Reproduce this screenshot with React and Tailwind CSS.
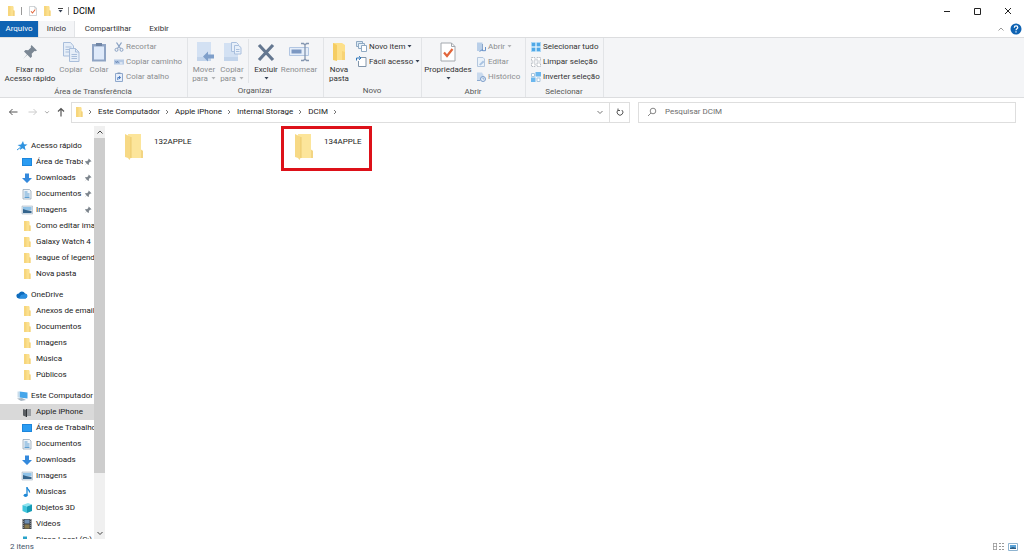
import React, { useState } from 'react';

/* ---------- Icons ---------- */

const FolderIcon = ({ className = 'w-3 h-3' }) => (
  <svg viewBox="0 0 12 12" className={className}>
    <path d="M3 1h5l.6 1v3l.9.5V11H3z" fill="#fbe08f" />
    <path d="M3 1h2.500v10H3z" fill="#f7d67c" />
    <path d="M8 5.400l1.500.4V11H8z" fill="#f3d27c" />
  </svg>
);

const BigFolderIcon = () => (
  <svg viewBox="0 0 22 28" className="w-[22px] h-7">
    <path d="M5 1h13v16l2 1v7H7z" fill="#fce59b" />
    <path d="M18 16.500l2 1.500v7h-2z" fill="#f3d583" />
    <path d="M2 1l6 3v20l-1.500 3-1.500-2-3-1z" fill="#f7d985" />
    <path d="M8 4v21" stroke="#e8c566" strokeWidth=".8" />
  </svg>
);

const RibbonFolderIcon = () => (
  <svg viewBox="0 0 20 20" className="w-5 h-5">
    <path d="M4 1h9l3 2v15H4z" fill="#fde08a" />
    <path d="M4 1l4 2v16l-4-1z" fill="#f5cd63" />
    <path d="M13 9l3 1v8h-3z" fill="#f7d375" />
  </svg>
);

const PinIcon = ({ className, color = '#7b8794' }) => (
  <svg viewBox="0 0 16 16" className={className}>
    <path d="M9.500 1L15 6.500l-1.500.8-1-.3-2.800 2.800.3 2.700-1.500 1.500-3.200-3.200L1 15l4-4.500L2 7.500 3.500 6l2.700.3L9 3.500l-.3-1z" fill={color} />
  </svg>
);

const CheckDocIcon = ({ className }) => (
  <svg viewBox="0 0 16 20" className={className}>
    <path d="M1 1h10.500L15 4.500V19H1z" fill="#fff" stroke="#a3a8ae" />
    <path d="M11.500 1v3.500H15" fill="none" stroke="#a3a8ae" />
    <path d="M4 10.500l3 3.500 5.500-7" fill="none" stroke="#e2653a" strokeWidth="2.200" />
  </svg>
);

const CopyIcon = () => (
  <svg viewBox="0 0 20 20" className="w-5 h-5" fill="#e6eef8" stroke="#a9bedb">
    <path d="M2.500.5h7L12.500 4v10h-10z" />
    <path d="M4.500 5h6M4.500 7.500h6M4.500 10h6" />
    <path d="M8.500 6.500h6l3.500 3.500v9.500H8.500z" />
    <path d="M14.500 6.500V10H18M10.500 12.500h5.500M10.500 14.500h5.500M10.500 16.500h5.500" fill="none" />
  </svg>
);

const PasteIcon = () => (
  <svg viewBox="0 0 20 20" className="w-5 h-5">
    <path d="M3 2h14v17.500H3z" fill="#8fa4c4" />
    <path d="M5 4.500h10v13H5z" fill="#dfeafa" />
    <path d="M7 1h6v3H7z" fill="#7186a5" />
  </svg>
);

const ScissorsIcon = () => (
  <svg viewBox="0 0 10 10" className="w-[10px] h-[10px]" fill="none" stroke="#8aa2c4">
    <path d="M2.500.5l4 6M7.500.5l-4 6" strokeWidth="1.300" />
    <circle cx="2.500" cy="7.800" r="1.500" />
    <circle cx="7.500" cy="7.800" r="1.500" />
  </svg>
);

const PathIcon = () => (
  <svg viewBox="0 0 10 10" className="w-[10px] h-[10px]">
    <path d="M0 2.500h10v5H0z" fill="#b5c9e4" />
    <path d="M1.500 4l1 2 1-2 1 2" fill="none" stroke="#6484b3" strokeWidth=".8" />
    <path d="M6 6h2.500" stroke="#fff" />
  </svg>
);

const ShortcutPasteIcon = () => (
  <svg viewBox="0 0 10 10" className="w-[10px] h-[10px]">
    <path d="M1.500 1.500h7v8h-7z" fill="#e6eefa" stroke="#8fa8cc" />
    <path d="M3.500.5h3v1.500h-3z" fill="#8198ba" />
    <path d="M3.800 8V5.500h2.500M5 4l1.700 1.500L5 7" fill="none" stroke="#4c7cc0" />
  </svg>
);

const MoveIcon = () => (
  <svg viewBox="0 0 20 20" className="w-5 h-5">
    <path d="M3 0h14v19H3z" fill="#d3e1f3" />
    <path d="M3 15h14v4H3z" fill="#c2d4eb" />
    <path d="M9 14.500l5-5v3h6v4h-6v3z" fill="#7f9fca" />
  </svg>
);

const CopyToIcon = () => (
  <svg viewBox="0 0 20 20" className="w-5 h-5">
    <path d="M2 1h14v18H2z" fill="#d3e1f3" />
    <path d="M2 15h14v4H2z" fill="#c2d4eb" />
    <path d="M9.500.5h5l2 2v7h-7z" fill="#e8f0fa" stroke="#aac0de" />
    <path d="M12.500 3.500h4l2.500 2v6.500h-6.500z" fill="#e8f0fa" stroke="#aac0de" />
    <path d="M14 7.500h3.500M14 9.500h3.500" stroke="#aac0de" />
  </svg>
);

const DeleteIcon = () => (
  <svg viewBox="0 0 20 20" className="w-5 h-5">
    <path d="M3 3l14 15M17 3L3 18" stroke="#647790" strokeWidth="3.200" />
  </svg>
);

const RenameIcon = () => (
  <svg viewBox="0 0 22 20" className="w-[22px] h-5">
    <path d="M1.500 5.500h19v8h-19z" fill="#e5eefa" stroke="#b2c6e2" />
    <path d="M3.500 7.500h10v4h-10z" fill="#7c98c2" />
    <path d="M13 1.500h2.500l1.500 1.500 1.500-1.500H21M17 3v14M13 18.500h2.500L17 17l1.500 1.500H21" fill="none" stroke="#8496b0" strokeWidth="1.300" />
  </svg>
);

const NewItemIcon = () => (
  <svg viewBox="0 0 11 11" className="w-[11px] h-[11px]">
    <path d="M.5.500h6v5h-6z" fill="#dbe9f5" stroke="#8fa9c2" />
    <path d="M2.500 2.500h6v5h-6z" fill="#eaf3fa" stroke="#8fa9c2" />
    <path d="M5.500 4.500h5v6h-5z" fill="#fff" stroke="#8fa9c2" />
  </svg>
);

const EasyAccessIcon = () => (
  <svg viewBox="0 0 11 11" className="w-[11px] h-[11px]">
    <path d="M5 1.500h5v9H2.500V5" fill="#fff" stroke="#8195aa" />
    <path d="M.5 4.500V2h3.500M3 .2L5 2 3 3.800" fill="none" stroke="#2c74b8" />
  </svg>
);

const OpenIcon = () => (
  <svg viewBox="0 0 10 10" className="w-[10px] h-[10px]">
    <path d="M1 .5h5.500V9H1z" fill="#b9cfe9" />
    <path d="M6.500 2v7" stroke="#8ba7cb" />
    <path d="M3.500 9.500l3-2v1.200H9.500V5" fill="none" stroke="#6a93c9" />
  </svg>
);

const EditIcon = () => (
  <svg viewBox="0 0 10 10" className="w-[10px] h-[10px]">
    <path d="M1.500.5H7l1.500 1.500v7.500h-7z" fill="#eaf2fa" stroke="#b4c7de" />
    <path d="M3 7.500l4-4 1.500 1.500-4 3.500z" fill="#a9c3e2" />
  </svg>
);

const HistoryIcon = () => (
  <svg viewBox="0 0 10 10" className="w-[10px] h-[10px]">
    <path d="M1 .5h5L7.500 3v6H1z" fill="#c9daee" />
    <circle cx="7" cy="7" r="2.500" fill="#e6eff9" stroke="#7b9cc8" />
    <path d="M7 5.500V7h1.300M1 8.500h3" fill="none" stroke="#7b9cc8" strokeWidth=".8" />
  </svg>
);

const SelectAllIcon = () => (
  <svg viewBox="0 0 10 10" className="w-[10px] h-[10px]">
    <path d="M0 0h10v10H0z" fill="#a9d6f5" />
    <path d="M1 1h3.500v3.500H1zM5.500 1H9v3.500H5.500zM1 5.500h3.500V9H1zM5.500 5.500H9V9H5.500z" fill="#4fa8e6" />
    <path d="M5 0v10M0 5h10" stroke="#e8f4fc" />
  </svg>
);

const SelectNoneIcon = () => (
  <svg viewBox="0 0 10 10" className="w-[10px] h-[10px]" fill="#fff" stroke="#b9bec4" strokeDasharray="1.500 .7">
    <path d="M.5.500h3.500V4H.5zM6 .5h3.500V4H6zM.5 6h3.500v3.500H.5zM6 6h3.500v3.500H6z" />
  </svg>
);

const InvertIcon = () => (
  <svg viewBox="0 0 10 10" className="w-[10px] h-[10px]">
    <path d="M.5 1.500h3V4.500h-3zM6 6h3v3.500H6z" fill="#fff" stroke="#a9c6de" />
    <path d="M4.500 0H10v4.500H4.500zM0 5.500h4.500V10H0z" fill="#6bb7ee" />
  </svg>
);

const StarIcon = () => (
  <svg viewBox="0 0 12 12" className="w-3 h-3">
    <path d="M7 1l1 3.300 3.500.3-2.800 2 .9 3.600-3-2-2.800 1.800.7-3.200L1.500 5l3.600-.4z" fill="#2e93e0" />
    <path d="M1 10l3-2.300" stroke="#2e93e0" />
  </svg>
);

const DesktopIcon = () => (
  <svg viewBox="0 0 12 12" className="w-3 h-3">
    <path d="M1 2h10v8H1z" fill="#1c86dc" />
    <path d="M2 3h8v6H2z" fill="#2b9cf2" />
  </svg>
);

const DownloadIcon = () => (
  <svg viewBox="0 0 12 12" className="w-3 h-3">
    <path d="M4 1.500h4V6h3l-5 5-5-5h3z" fill="#3489dc" />
  </svg>
);

const DocumentIcon = () => (
  <svg viewBox="0 0 12 12" className="w-3 h-3">
    <path d="M2 1.500h6.500L10 3v8H2z" fill="#eef4f9" stroke="#98a8b7" strokeWidth=".8" />
    <path d="M3.500 4h3M3.500 6h5M3.500 8h5M3.500 9.500h5" stroke="#4d94cc" strokeWidth=".9" />
  </svg>
);

const PictureIcon = () => (
  <svg viewBox="0 0 12 12" className="w-3 h-3">
    <path d="M1 2h10.500v8H1z" fill="#dce7f0" stroke="#a9b7c3" strokeWidth=".6" />
    <path d="M2 3h8.500v3H2z" fill="#8fc2e8" />
    <path d="M2 5l3 1 5.500 1v2H2z" fill="#34648c" />
  </svg>
);

const CloudIcon = () => (
  <svg viewBox="0 0 12 12" className="w-3 h-3">
    <path d="M3 9.500a2.500 2.500 0 0 1-.2-5A3.500 3.500 0 0 1 9 4.500a2.600 2.600 0 0 1 .5 5z" fill="#0f6cbd" />
    <path d="M5 6l5-1.200a2.500 2.500 0 0 1-.5 4.700H3z" fill="#2b8fe0" />
  </svg>
);

const ComputerIcon = () => (
  <svg viewBox="0 0 12 12" className="w-3 h-3">
    <path d="M3.500 1.500l8 1v6l-8-1z" fill="#46a6ea" />
    <path d="M1 8.500l5-.5 4 2-5 1z" fill="#a7b6c3" />
    <path d="M1.500 1.500h2v6h-2z" fill="#c9dceb" />
  </svg>
);

const PhoneIcon = () => (
  <svg viewBox="0 0 12 12" className="w-3 h-3">
    <path d="M2 3l3.500 1v7L2 9.500z" fill="#5b5f63" />
    <path d="M5.500 3H10v7H5.500z" fill="#9a9ea2" />
    <path d="M5.500 3v8" stroke="#2f3235" />
  </svg>
);

const MusicIcon = () => (
  <svg viewBox="0 0 12 12" className="w-3 h-3">
    <path d="M6 1.500c.3 2 3 2.500 2.500 5" fill="none" stroke="#1d87d6" strokeWidth="1.300" />
    <path d="M6 1v8" stroke="#1d87d6" strokeWidth="1.300" />
    <ellipse cx="4.600" cy="9.300" rx="2" ry="1.600" fill="#1d87d6" />
  </svg>
);

const CubeIcon = () => (
  <svg viewBox="0 0 12 12" className="w-3 h-3">
    <path d="M1.500 3L7 1l4 1.500-5 2z" fill="#8ee3ef" />
    <path d="M1.500 3L6 4.500V11l-4.500-2z" fill="#3fc5dc" />
    <path d="M6 4.500l5-2V9l-5 2z" fill="#159bb5" />
  </svg>
);

const VideoIcon = () => (
  <svg viewBox="0 0 12 12" className="w-3 h-3">
    <path d="M1.500 1h9v10h-9z" fill="#3c424a" />
    <path d="M3.500 1.500h5v4h-5z" fill="#6f8fb3" />
    <path d="M3.500 6.500h5v4h-5z" fill="#8a7b4e" />
    <path d="M2.400 1v10M9.600 1v10" stroke="#c4c8cc" strokeWidth=".6" strokeDasharray="1 1" />
  </svg>
);

const DriveIcon = () => (
  <svg viewBox="0 0 12 12" className="w-3 h-3">
    <path d="M2 2.500h4V6H2z" fill="#29a3c9" />
    <path d="M1 7h10v3H1z" fill="#a5adb5" />
  </svg>
);

const Chevron = ({ d, className = 'w-2 h-2', color = '#777' }) => (
  <svg viewBox="0 0 8 8" className={className}>
    <path d={d} fill="none" stroke={color} />
  </svg>
);

const UP = 'M1.500 5.500L4 3l2.500 2.500';
const DOWN = 'M1.500 3L4 5.500 6.500 3';
const RIGHT = 'M3 2l2 2-2 2';

const Caret = ({ className = 'text-gray-700' }) => (
  <svg viewBox="0 0 5 3" className={`w-[5px] h-[3px] inline-block shrink-0 ${className}`}>
    <path d="M.5 0h4L2.500 2.500z" fill="currentColor" />
  </svg>
);

/* ---------- Data ---------- */

const tree = [
  {
    label: 'Acesso rápido',
    icon: StarIcon,
    items: [
      { label: 'Área de Trabalho', icon: DesktopIcon, pinned: true },
      { label: 'Downloads', icon: DownloadIcon, pinned: true },
      { label: 'Documentos', icon: DocumentIcon, pinned: true },
      { label: 'Imagens', icon: PictureIcon, pinned: true },
      { label: 'Como editar imagens', icon: FolderIcon },
      { label: 'Galaxy Watch 4', icon: FolderIcon },
      { label: 'league of legends', icon: FolderIcon },
      { label: 'Nova pasta', icon: FolderIcon },
    ],
  },
  {
    label: 'OneDrive',
    icon: CloudIcon,
    items: [
      { label: 'Anexos de email', icon: FolderIcon },
      { label: 'Documentos', icon: FolderIcon },
      { label: 'Imagens', icon: FolderIcon },
      { label: 'Música', icon: FolderIcon },
      { label: 'Públicos', icon: FolderIcon },
    ],
  },
  {
    label: 'Este Computador',
    icon: ComputerIcon,
    items: [
      { label: 'Apple iPhone', icon: PhoneIcon, selected: true },
      { label: 'Área de Trabalho', icon: DesktopIcon },
      { label: 'Documentos', icon: DocumentIcon },
      { label: 'Downloads', icon: DownloadIcon },
      { label: 'Imagens', icon: PictureIcon },
      { label: 'Músicas', icon: MusicIcon },
      { label: 'Objetos 3D', icon: CubeIcon },
      { label: 'Vídeos', icon: VideoIcon },
      { label: 'Disco Local (C:)', icon: DriveIcon },
    ],
  },
];

const crumbs = ['Este Computador', 'Apple iPhone', 'Internal Storage', 'DCIM'];

/* ---------- Ribbon ---------- */

const Group = ({ label, className, children }) => (
  <div className={`flex flex-col shrink-0 border-r border-[#e2e4e7] pt-px ${className}`}>
    <div className="flex h-[45px]">{children}</div>
    <div className="leading-[16px] -ml-px text-center text-[#555]">{label}</div>
  </div>
);

const BigButton = ({ icon, lines, caret, disabled, className }) => (
  <button
    type="button"
    disabled={disabled}
    className={`flex flex-col items-center shrink-0 pt-[3px] leading-[9px] ${disabled ? 'text-[#8b8d90]' : 'text-[#333]'} ${className}`}
  >
    <span className="h-[23px] flex items-start justify-center">{icon}</span>
    {lines.map((line, i) => (
      <span key={line} className="whitespace-nowrap flex items-center gap-[3px]">
        {line}
        {caret === 'inline' && i === lines.length - 1 && <Caret className="text-[#b0b2b5]" />}
      </span>
    ))}
    {caret === 'below' && <span className="h-[9px] flex items-center"><Caret /></span>}
  </button>
);

const SmallButton = ({ icon, label, caret, disabled }) => (
  <button
    type="button"
    disabled={disabled}
    className={`flex items-center gap-[2px] h-[15px] whitespace-nowrap ${disabled ? 'text-[#8b8d90]' : 'text-[#333]'}`}
  >
    {icon}
    <span>{label}</span>
    {caret && <Caret className={disabled ? 'text-[#b0b2b5]' : 'text-gray-700'} />}
  </button>
);

const Ribbon = () => (
  <div className="flex shrink-0 h-[61px] bg-[#f4f5f7] border-y border-[#dcdddf] overflow-hidden">
    <Group label="Área de Transferência" className="w-[188px]">
      <BigButton className="w-[58px] ml-px" icon={<PinIcon className="w-4 h-4 mt-[2px]" />} lines={['Fixar no', 'Acesso rápido']} />
      <BigButton className="w-6 mr-[2px]" icon={<CopyIcon />} lines={['Copiar']} disabled />
      <BigButton className="w-7" icon={<PasteIcon />} lines={['Colar']} disabled />
      <div className="ml-px">
        <SmallButton icon={<ScissorsIcon />} label="Recortar" disabled />
        <SmallButton icon={<PathIcon />} label="Copiar caminho" disabled />
        <SmallButton icon={<ShortcutPasteIcon />} label="Colar atalho" disabled />
      </div>
    </Group>
    <Group label="Organizar" className="w-[136px]">
      <BigButton className="w-8" icon={<MoveIcon />} lines={['Mover', 'para']} caret="inline" disabled />
      <BigButton className="w-6" icon={<CopyToIcon />} lines={['Copiar', 'para']} caret="inline" disabled />
      <div className="w-px mx-1 bg-[#e2e4e7]" />
      <BigButton className="w-[26px]" icon={<DeleteIcon />} lines={['Excluir']} caret="below" />
      <BigButton className="w-10" icon={<RenameIcon />} lines={['Renomear']} disabled />
    </Group>
    <Group label="Novo" className="w-[98px]">
      <BigButton className="w-[30px]" icon={<RibbonFolderIcon />} lines={['Nova', 'pasta']} />
      <div className="ml-[2px]">
        <SmallButton icon={<NewItemIcon />} label="Novo item" caret />
        <SmallButton icon={<EasyAccessIcon />} label="Fácil acesso" caret />
      </div>
    </Group>
    <Group label="Abrir" className="w-[104px]">
      <BigButton className="w-[52px] mr-[2px]" icon={<CheckDocIcon className="w-4 h-5" />} lines={['Propriedades']} caret="below" />
      <div>
        <SmallButton icon={<OpenIcon />} label="Abrir" caret disabled />
        <SmallButton icon={<EditIcon />} label="Editar" disabled />
        <SmallButton icon={<HistoryIcon />} label="Histórico" disabled />
      </div>
    </Group>
    <Group label="Selecionar" className="w-[78px]">
      <div className="ml-[5px]">
        <SmallButton icon={<SelectAllIcon />} label="Selecionar tudo" />
        <SmallButton icon={<SelectNoneIcon />} label="Limpar seleção" />
        <SmallButton icon={<InvertIcon />} label="Inverter seleção" />
      </div>
    </Group>
  </div>
);

/* ---------- Window parts ---------- */

const TitleBar = () => (
  <header className="flex shrink-0 items-center h-[21px] pl-1">
    <FolderIcon className="w-[14px] h-3" />
    <span className="w-px h-2 ml-[3px] bg-[#999]" />
    <CheckDocIcon className="w-2 h-[10px] ml-[7px]" />
    <FolderIcon className="w-[14px] h-3 ml-[3px]" />
    <button type="button" aria-label="Personalizar" className="ml-1 flex flex-col items-center gap-[1px]">
      <span className="w-[5px] h-px bg-[#444]" />
      <Caret />
    </button>
    <span className="w-px h-2 ml-[5px] mr-1 bg-[#999]" />
    <h1 className="text-[9px] text-black">DCIM</h1>
    <div className="ml-auto flex items-center h-full">
      <button type="button" aria-label="Minimizar" className="w-[30px] flex justify-center">
        <svg viewBox="0 0 8 8" className="w-2 h-2"><path d="M1 4.500h6" stroke="#222" /></svg>
      </button>
      <button type="button" aria-label="Maximizar" className="w-[30px] flex justify-center">
        <svg viewBox="0 0 8 8" className="w-2 h-2"><path d="M1.500 1.500h6v6h-6z" fill="none" stroke="#222" /></svg>
      </button>
      <button type="button" aria-label="Fechar" className="w-8 flex justify-center">
        <svg viewBox="0 0 8 8" className="w-2 h-2"><path d="M1 1l6 6M7 1L1 7" stroke="#222" /></svg>
      </button>
    </div>
  </header>
);

const Tabs = () => (
  <div className="flex shrink-0 items-stretch h-4 text-[#333]">
    <button type="button" className="w-[38px] bg-[#0f63b3] text-white">Arquivo</button>
    <button type="button" className="w-[37px] bg-[#f4f5f7] border-x border-[#e2e4e7]">Início</button>
    <button type="button" className="w-[66px]">Compartilhar</button>
    <button type="button" className="w-9">Exibir</button>
    <div className="ml-auto flex items-center gap-[5px] pr-[2px]">
      <button type="button" aria-label="Minimizar a faixa de opções"><Chevron d={UP} color="#999" /></button>
      <button type="button" aria-label="Ajuda">
        <svg viewBox="0 0 12 12" className="w-3 h-3">
          <circle cx="6" cy="6" r="5.500" fill="#0f63b3" />
          <path d="M4.300 4.700c0-2.400 3.500-2.200 3.500-.2C7.800 5.800 6 5.700 6 7.200M6 8.300v1.200" fill="none" stroke="#fff" strokeWidth="1.200" />
        </svg>
      </button>
    </div>
  </div>
);

const AddressBar = () => {
  const [query, setQuery] = useState('');

  return (
    <div className="flex shrink-0 items-center h-7 px-2">
      <div className="flex items-center w-[63px] gap-[6px]">
        <button type="button" aria-label="Voltar">
          <svg viewBox="0 0 10 10" className="w-[10px] h-[10px]" fill="none" stroke="#555"><path d="M9.500 5H1.500M4.500 2l-3 3 3 3" /></svg>
        </button>
        <button type="button" aria-label="Avançar" disabled className="ml-1">
          <svg viewBox="0 0 10 10" className="w-[10px] h-[10px]" fill="none" stroke="#ccc"><path d="M.5 5h8M5.500 2l3 3-3 3" /></svg>
        </button>
        <button type="button" aria-label="Locais recentes"><Chevron d={DOWN} color="#888" className="w-[6px] h-[6px]" /></button>
        <button type="button" aria-label="Acima">
          <svg viewBox="0 0 10 10" className="w-[10px] h-[10px]" fill="none" stroke="#555" strokeWidth="1.200"><path d="M5 9.500v-8M2 4.500l3-3 3 3" /></svg>
        </button>
      </div>

      {/* Breadcrumb */}
      <nav className="flex flex-1 items-center h-[21px] border border-[#dedede] text-[#222]">
        <FolderIcon className="w-[14px] h-3" />
        <Chevron d={RIGHT} />
        {crumbs.map((crumb) => (
          <React.Fragment key={crumb}>
            <a href="#" className="ml-1 mr-[3px] whitespace-nowrap">{crumb}</a>
            <Chevron d={RIGHT} />
          </React.Fragment>
        ))}
        <button type="button" aria-label="Locais anteriores" className="ml-auto mr-[5px]"><Chevron d={DOWN} /></button>
        <button type="button" aria-label="Atualizar" className="w-5 h-full border-l border-[#dedede] flex items-center justify-center">
          <svg viewBox="0 0 8 8" className="w-2 h-2" fill="none" stroke="#555">
            <path d="M2.200 2A2.900 2.900 0 1 0 5.800 2M2 .5v2h2" />
          </svg>
        </button>
      </nav>

      {/* Search */}
      <label className="flex items-center w-[37.5%] h-[21px] ml-2 pl-2 gap-2 border border-[#dedede]">
        <svg viewBox="0 0 10 10" className="w-[10px] h-[10px]" fill="none" stroke="#888">
          <circle cx="6" cy="4" r="2.800" />
          <path d="M4 6L1 9" />
        </svg>
        <input
          type="text"
          aria-label="Pesquisar DCIM"
          placeholder="Pesquisar DCIM"
          value={query}
          onChange={(e) => setQuery(e.target.value)}
          className="flex-1 min-w-0 outline-none placeholder:text-[#6d6d6d]"
        />
      </label>
    </div>
  );
};

const TreeRow = ({ item, nested }) => {
  const Icon = item.icon;
  return (
    <a
      href="#"
      className={`flex items-center h-4 gap-[3px] whitespace-nowrap overflow-hidden ${nested ? 'pl-[21px]' : 'pl-4'} ${item.selected ? 'bg-[#d9d9d9]' : ''}`}
    >
      <span className="shrink-0"><Icon /></span>
      <span className={item.pinned ? 'w-[47px] overflow-hidden' : ''}>{item.label}</span>
      {item.pinned && <PinIcon className="w-2 h-2 -ml-[2px] shrink-0" color="#7d858d" />}
    </a>
  );
};

const Sidebar = () => (
  <aside className="flex shrink-0 w-[105px]">
    <nav className="flex-1 min-w-0 overflow-hidden pt-3 text-[#222]">
      {tree.map((section) => (
        <div key={section.label} className="mb-[5px]">
          <TreeRow item={section} />
          {section.items.map((item) => (
            <TreeRow key={item.label} item={item} nested />
          ))}
        </div>
      ))}
    </nav>
    <div className="flex flex-col w-[11px] bg-[#f0f0f0]">
      <button type="button" aria-label="Rolar para cima" className="h-3 flex items-center justify-center"><Chevron d={UP} color="#444" /></button>
      <div className="h-[81%] bg-[#cdcdcd]" />
      <button type="button" aria-label="Rolar para baixo" className="h-3 mt-auto flex items-center justify-center"><Chevron d={DOWN} color="#444" /></button>
    </div>
  </aside>
);

const FileTile = ({ name, highlighted }) => (
  <button
    type="button"
    className={`flex items-start w-[91px] h-[45px] gap-[9px] pl-[9px] border-3 text-[#222] ${highlighted ? 'border-[#dd1119]' : 'border-transparent'}`}
  >
    <span className="pt-1"><BigFolderIcon /></span>
    <span className="pt-[7px]">{name}</span>
  </button>
);

const App = () => {
  return (
    <div className="h-screen flex flex-col overflow-hidden bg-white text-[8px] leading-[12px] font-[Roboto,'Open_Sans',sans-serif]">
      <TitleBar />
      <Tabs />
      <Ribbon />
      <AddressBar />
      <div className="flex flex-1 min-h-0">
        <Sidebar />
        <main className="flex flex-1 items-start gap-[79px] pl-[6px]">
          <FileTile name="132APPLE" />
          <FileTile name="134APPLE" highlighted />
        </main>
      </div>

      {/* Status bar */}
      <footer className="flex shrink-0 items-center h-4 pl-[10px] pr-[6px] text-[#44546a]">
        <span>2 itens</span>
        <div className="ml-auto flex items-center gap-1">
          <button type="button" aria-label="Detalhes">
            <svg viewBox="0 0 12 10" className="w-3 h-[10px]" fill="none" stroke="#999">
              <path d="M1 1.500h4M1 4.500h4M1 7.500h4M1.500 1v7M4.500 1v7" strokeWidth=".8" />
              <path d="M7 1.500h5M7 4.500h5M7 7.500h5" strokeDasharray="2 1" />
            </svg>
          </button>
          <button type="button" aria-label="Ícones grandes">
            <svg viewBox="0 0 10 10" className="w-[10px] h-[10px]">
              <path d="M.5 1.500h9v7h-9z" fill="#fff" stroke="#8fb4d0" />
              <path d="M2 3h6v4H2z" fill="#5aa3d8" />
              <path d="M2 6l3-1 3 1v1H2z" fill="#2f5f85" />
            </svg>
          </button>
        </div>
      </footer>
    </div>
  );
};

export default App;
